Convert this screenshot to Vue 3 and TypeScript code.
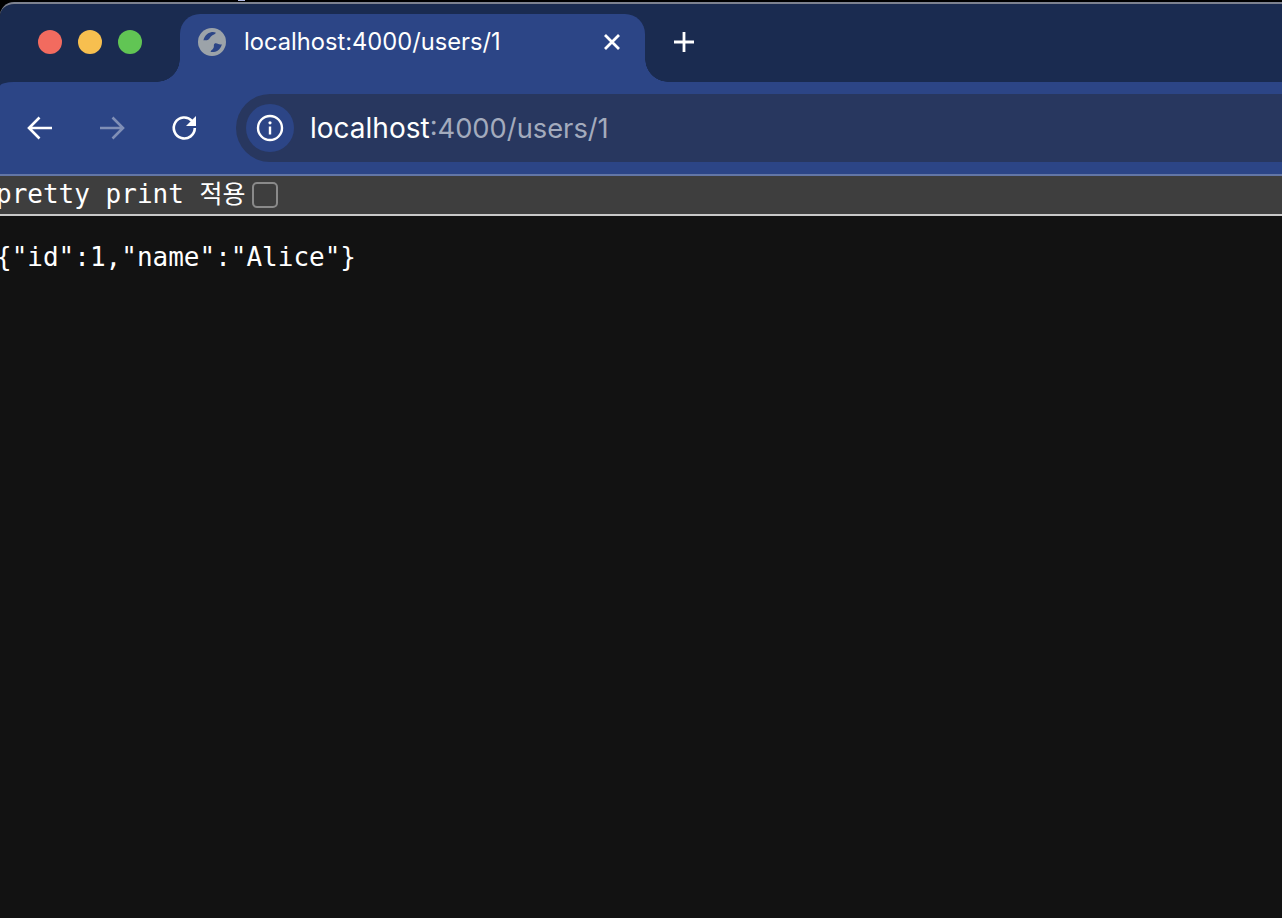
<script setup lang="ts">
const title = 'localhost:4000/users/1'
</script>

<template>
  <div class="page">
    <span class="glint"></span>
    <div class="chrome">
      <header class="tabstrip">
        <div class="lights">
          <span class="light red"></span>
          <span class="light yellow"></span>
          <span class="light green"></span>
        </div>
        <div class="tab">
          <svg class="globe" width="28" height="28" viewBox="0 0 28 28">
            <circle cx="14" cy="14" r="14" fill="#9ca3a9" />
            <path d="M5.500 12.500C6 8.500 9 5 13 4.200c1.800-.3 3.500-.1 5 .5-1 1.500-2.800 2-4.200 3-1.800 1.200-1.800 3-3.600 4-1.800 1-3.700.3-5.700.8z" fill="#2c4586" />
            <path d="M12.500 23.800c.8-2 2.500-2.300 3.200-4.300.5-1.500-.3-2.800.8-3.800 1.200-1 2.500-.2 3.800.4 1.200.5 2.400.5 3.500.1-.6 4-4 7.300-8 7.800-1 .1-2.300.1-3.300-.2z" fill="#2c4586" />
          </svg>
          <span class="tab-title">{{ title }}</span>
          <svg class="close" width="16" height="16" viewBox="0 0 16 16">
            <path d="M1 1l14 14M15 1L1 15" stroke="#fff" stroke-width="2.800" fill="none" />
          </svg>
        </div>
        <svg class="plus" width="20" height="20" viewBox="0 0 20 20">
          <path d="M10 0v20M0 10h20" stroke="#fff" stroke-width="2.800" fill="none" />
        </svg>
      </header>
      <div class="toolbar-wrap">
        <nav class="toolbar">
          <svg class="nav-icon" width="26" height="24" viewBox="0 0 26 24">
            <path d="M25 12H2M12.500 1.500L2 12l10.500 10.500" stroke="#fff" stroke-width="2.600" fill="none" />
          </svg>
          <svg class="nav-icon dim" width="26" height="24" viewBox="0 0 26 24">
            <path d="M1 12h23M13.500 1.500L24 12 13.500 22.500" stroke="#fff" stroke-width="2.600" fill="none" />
          </svg>
          <svg class="nav-icon reload" width="26" height="26" viewBox="0 0 26 26">
            <path d="M21 5.800A10.500 10.500 0 1 0 23.800 13" stroke="#fff" stroke-width="2.600" fill="none" />
            <path d="M25 1v10h-10z" fill="#fff" />
          </svg>
          <div class="omnibox">
            <span class="info">
              <svg width="28" height="28" viewBox="0 0 28 28">
                <circle cx="14" cy="14" r="12" stroke="#fff" stroke-width="2.400" fill="none" />
                <circle cx="14" cy="8.800" r="1.600" fill="#fff" />
                <path d="M14 12.500v8" stroke="#fff" stroke-width="2.400" />
              </svg>
            </span>
            <span class="url"><span class="host">localhost</span><span class="rest">:4000/users/1</span></span>
          </div>
        </nav>
      </div>
    </div>
    <div class="pretty-bar">
      <label class="pretty-label">pretty print <span class="ko">적용</span></label>
      <span class="checkbox"></span>
    </div>
    <main class="content">
      <pre class="json">{"id":1,"name":"Alice"}</pre>
    </main>
  </div>
</template>

<style>
html, body {
  margin: 0;
  background: #121212;
  overflow: hidden;
}
</style>

<style scoped>
.page {
  width: 1282px;
  height: 918px;
  position: relative;
  display: flex;
  flex-direction: column;
  background: #121212;
  font-family: "Inter", "Liberation Sans", sans-serif;
  overflow: hidden;
}
.glint {
  position: absolute;
  top: 0;
  left: 238px;
  width: 7px;
  height: 1px;
  background: #b4bce6;
}
.chrome {
  flex: none;
  background: #000;
  padding-top: 2px;
}
.tabstrip {
  height: 80px;
  box-sizing: border-box;
  background: #1a2b50;
  border-top: 2px solid #7d8290;
  border-top-left-radius: 14px;
  display: flex;
  align-items: flex-start;
}
.lights {
  width: 180px;
  flex: none;
  display: flex;
  gap: 16px;
  padding: 26px 0 0 38px;
  box-sizing: border-box;
}
.light {
  width: 24px;
  height: 24px;
  border-radius: 50%;
}
.red { background: #f26b5f; }
.yellow { background: #f7bf4f; }
.green { background: #61c554; }
.tab {
  width: 465px;
  height: 68px;
  margin-top: 10px;
  flex: none;
  position: relative;
  box-sizing: border-box;
  background: #2c4586;
  border-radius: 20px 20px 0 0;
  display: flex;
  align-items: flex-start;
  padding: 14px 0 0 18px;
  color: #fff;
}
.tab::before,
.tab::after {
  content: "";
  position: absolute;
  bottom: 0;
  width: 23px;
  height: 23px;
}
.tab::before {
  left: -23px;
  background: radial-gradient(circle at 0 0, #1a2b50 22.500px, #2c4586 23px);
}
.tab::after {
  right: -23px;
  background: radial-gradient(circle at 100% 0, #1a2b50 22.500px, #2c4586 23px);
}
.globe { flex: none; }
.tab-title {
  margin-left: 18px;
  font-size: 23.700px;
  line-height: 28px;
  width: 360px;
  flex: none;
  white-space: nowrap;
}
.close { margin: 6px 0 0 0; flex: none; }
.plus {
  flex: none;
  margin: 28px 0 0 29px;
}
.toolbar-wrap {
  background: #1a2b50;
}
.toolbar {
  height: 92px;
  box-sizing: border-box;
  background: #2c4586;
  border-top-left-radius: 14px 4px;
  display: flex;
  align-items: center;
  padding-left: 27px;
}
.nav-icon { flex: none; margin-right: 46px; }
.dim { opacity: 0.4; }
.reload { margin-right: 39px; }
.omnibox {
  flex: 1;
  height: 68px;
  background: #28375f;
  border-radius: 34px 0 0 34px;
  display: flex;
  align-items: center;
  padding-left: 10px;
}
.info {
  width: 48px;
  height: 48px;
  border-radius: 50%;
  background: #2c4586;
  display: flex;
  align-items: center;
  justify-content: center;
  flex: none;
}
.url {
  margin-left: 16px;
  white-space: nowrap;
}
.host { color: #fff; font-size: 28px; }
.rest { color: #a3abbd; font-size: 27.300px; }
.pretty-bar {
  height: 42px;
  flex: none;
  box-sizing: border-box;
  background: #3e3e3e;
  border-top: 2px solid #6376a6;
  border-bottom: 2px solid #c8c8c8;
  display: flex;
  align-items: center;
  color: #fff;
  font-family: "DejaVu Sans Mono", "Noto Sans CJK KR", monospace;
  font-size: 26px;
}
.pretty-label {
  margin-left: -4px;
  white-space: pre;
  line-height: 34px;
  position: relative;
  top: -1px;
}
.ko {
  font-size: 25px;
}
.checkbox {
  width: 26px;
  height: 26px;
  box-sizing: border-box;
  border: 2px solid #8a8a8a;
  border-radius: 5px;
  margin-left: 6px;
  flex: none;
}
.content {
  flex: 1;
  background: #121212;
}
.json {
  margin: 26px 0 0 -4px;
  color: #fff;
  font-family: "DejaVu Sans Mono", monospace;
  font-size: 26px;
  line-height: 30px;
}
</style>
